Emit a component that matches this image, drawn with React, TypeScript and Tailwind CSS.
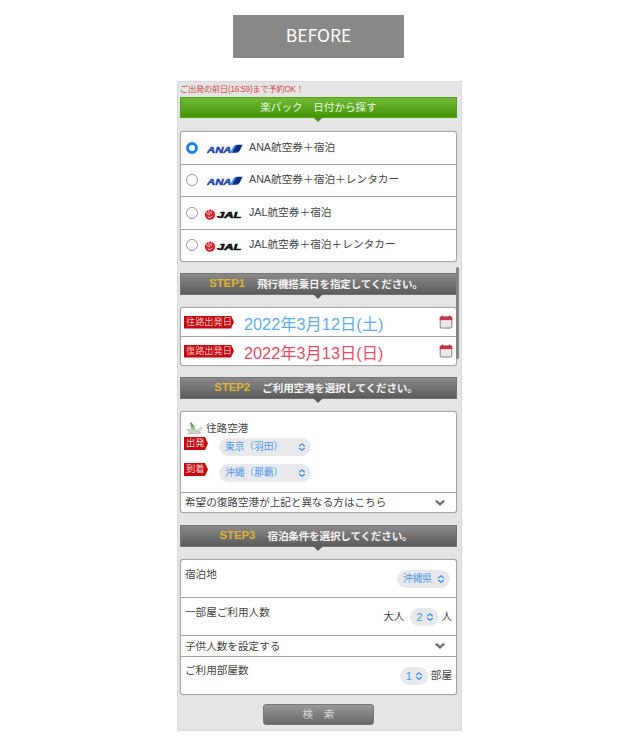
import type { ReactNode } from "react";
import clsx from "clsx";

function AnaLogo() {
  return (
    <svg className="w-[36px] h-[11px] ml-[8px]" viewBox="0 0 36 11">
      <text
        x="0"
        y="9.8"
        fontSize="9.8"
        fontWeight="900"
        fontStyle="italic"
        fontFamily="Liberation Sans, sans-serif"
        fill="#2444a8"
        stroke="#2444a8"
        strokeWidth="0.5"
        textLength="24.5"
        lengthAdjust="spacingAndGlyphs">
        ANA
      </text>
      <path d="M23 9.8 L26.6 3.4 Q27.5 1.8 29.5 1.8 L31 1.8 L26.3 9.8 Z" fill="#3d8fd0" />
      <path d="M25.2 9.8 L28.6 3.6 Q29.6 1.8 31.6 1.8 L35.6 1.8 L32.5 8 Q31.5 9.8 29.5 9.8 Z" fill="#0c2c8c" />
    </svg>
  );
}

function JalLogo() {
  return (
    <svg className="w-[38px] h-[13px] ml-[6px]" viewBox="0 0 38 13">
      <circle cx="6" cy="6.6" r="5.2" fill="#d8232e" />
      <path d="M2 3.2 Q2.6 7 6 7 M4.6 1.6 Q4 5.2 6.2 5.6 M8 2.2 Q6 4 7.4 6" stroke="#f6c5c7" strokeWidth="0.9" fill="none" />
      <path d="M4 9.2 Q6.6 10.2 8.4 7.9" stroke="#f6c5c7" strokeWidth="0.9" fill="none" />
      <text
        x="13"
        y="10.3"
        fontSize="9.4"
        fontWeight="900"
        fontStyle="italic"
        fontFamily="Liberation Sans, sans-serif"
        fill="#111"
        stroke="#111"
        strokeWidth="0.6"
        textLength="24.5"
        lengthAdjust="spacingAndGlyphs">
        JAL
      </text>
    </svg>
  );
}

function CalendarIcon() {
  return (
    <svg className="w-[14px] h-[14px]" viewBox="0 0 14 14">
      <rect x="1.2" y="2" width="11.6" height="11" rx="1" fill="#f3eeee" stroke="#857b7b" />
      <path d="M0.8 1.6 H13.2 V5.2 H0.8 Z" fill="#c9364a" />
      <path d="M3.5 0.6 V2.8 M10.5 0.6 V2.8" stroke="#7d4a50" strokeWidth="1.2" />
      <path d="M3 8 H11 M3 10.5 H11" stroke="#e0dada" strokeWidth="0.8" />
    </svg>
  );
}

function PlaneIcon() {
  return (
    <svg className="w-[17px] h-[14px]" viewBox="0 0 17 14">
      <path d="M0.8 7.6 L5 7.4 L13 9.8 Q15 10.6 14.4 11.6 Q12 12.4 8 11.4 L2.4 9.2 Z" fill="#d3d5d3" stroke="#a3a8a3" strokeWidth="0.5" />
      <path d="M9.8 9.4 L14.8 5.2 L16 5.4 L13.4 10 Z" fill="#dfe2df" stroke="#a5aaa5" strokeWidth="0.5" />
      <path d="M3.4 9.8 L1.6 12.4 L3 12.6 L8.4 11.4 Z" fill="#c3c7c3" />
      <path d="M4 0.6 L5.6 0.8 L9.4 6 L9.2 8.4 L5.2 7.4 Z" fill="#9cc792" />
      <path d="M4 0.6 L5.6 0.8 L8.6 5 L5.6 5 Z" fill="#4fae3d" />
    </svg>
  );
}

function ChevronDown() {
  return (
    <svg className="w-[10px] h-[8px]" viewBox="0 0 10 8">
      <path d="M0.8 1.6 L5 5.4 L9.2 1.6" stroke="#757575" strokeWidth="2.5" fill="none" />
    </svg>
  );
}

function Bar({ children, green }: { children: ReactNode; green?: boolean }) {
  return (
    <div
      className={clsx(
        "relative w-[277px] flex items-center justify-center border text-[10.6px] leading-none whitespace-pre",
        green
          ? "h-[21px] bg-linear-to-b from-[#70b833] to-[#429600] border-[#519d1c] text-[#d6ebc5] font-medium"
          : "h-[22px] pr-[5px] bg-linear-to-b from-[#8b8b8b] to-[#5b5b5b] border-[#747474] text-[#f2f2f2] font-bold"
      )}>
      {children}
      <div
        className={clsx(
          "absolute top-full left-[132px] border-x-[5px] border-x-transparent border-t-[5px]",
          green ? "border-t-[#459414]" : "border-t-[#5b5b5b]"
        )}
      />
    </div>
  );
}

function Step({ label, title }: { label: string; title: string }) {
  return (
    <Bar>
      <span className="text-[#dfb32e] mr-[11px] w-[37px] text-[11.3px]">{label}</span>
      <span className="tracking-[-0.2px]">{title}</span>
    </Bar>
  );
}

function Card({ children, className }: { children: ReactNode; className?: string }) {
  return (
    <div
      className={clsx(
        "w-[277px] bg-white border border-[#a6a6a6] rounded-[3px] shadow-[0_0_1px_#999] divide-y divide-[#a3a3a3] flex flex-col",
        className
      )}>
      {children}
    </div>
  );
}

function Tag({ children, className }: { children: ReactNode; className?: string }) {
  return (
    <div
      className={clsx(
        "h-[13px] bg-[#c4090f] text-[9.2px] leading-[12px] pl-[2px] whitespace-nowrap [clip-path:polygon(0_0,calc(100%-3px)_0,100%_50%,calc(100%-3px)_100%,0_100%)]",
        className
      )}>
      {children}
    </div>
  );
}

function Select({ children, className }: { children: ReactNode; className?: string }) {
  return (
    <div
      className={clsx(
        "h-[18px] rounded-full bg-[#e9e9eb] flex items-center justify-between pl-[6px] pr-[5px] leading-none text-[#4a9bf0] whitespace-nowrap",
        className
      )}>
      <span>{children}</span>
      <svg className="w-[8px] h-[10px] shrink-0" viewBox="0 0 8 10">
        <path d="M1.2 4.2 L4 1.8 L6.8 4.2 M1.2 6 L4 8.4 L6.8 6" stroke="#3f96f3" strokeWidth="1.4" fill="none" />
      </svg>
    </div>
  );
}

const plans = [
  { airline: "ana", label: "ANA航空券＋宿泊", checked: true },
  { airline: "ana", label: "ANA航空券＋宿泊＋レンタカー" },
  { airline: "jal", label: "JAL航空券＋宿泊" },
  { airline: "jal", label: "JAL航空券＋宿泊＋レンタカー" },
];

const dates = [
  { tag: "往路出発日", value: "2022年3月12日(土)", color: "text-[#61adea]" },
  { tag: "復路出発日", value: "2022年3月13日(日)", color: "text-[#e64d67]" },
];

function App() {
  return (
    <div className="w-[640px] h-[750px] bg-white pt-[15px] overflow-hidden">
      <div className="ml-[233px] w-[171px] h-[43px] bg-[#888] text-white text-[17.5px] flex items-center justify-center pb-[3px] font-['Noto_Sans_CJK_JP','Noto_Sans',sans-serif]">
        BEFORE
      </div>

      <div className="relative ml-[177px] mt-[23px] w-[285px] h-[650px] bg-[#e5e5e5] border border-[#d9d9d9] pl-[2px] text-[10.6px] leading-none text-[#444] font-['Liberation_Sans','Noto_Sans_CJK_JP',sans-serif]">
        <div className="h-[15px] pt-[3px] text-[8.2px] leading-[10px] tracking-[-0.2px] text-[#d44a4a] whitespace-nowrap">
          ご出発の前日(16:59)まで予約OK！
        </div>
        <Bar green>楽パック　日付から探す</Bar>

        <Card className="mt-[13px] h-[131px]">
          {plans.map((plan) => (
            <div key={plan.label} className="flex-1 flex items-center pl-[5px]">
              <div
                className={clsx(
                  "w-[12px] h-[12px] rounded-full bg-white",
                  plan.checked ? "border-[3.5px] border-[#1b82f5]" : "border border-[#999]"
                )}
              />
              {plan.airline === "ana" ? (
                <div className="w-[51px] pt-[1px] pl-[1px]"><AnaLogo /></div>
              ) : (
                <div className="w-[51px] pt-[3px]"><JalLogo /></div>
              )}
              <span className="whitespace-nowrap -mt-[1px] text-[10.7px]">{plan.label}</span>
            </div>
          ))}
        </Card>

        <div className="mt-[11px]">
          <Step label="STEP1" title="飛行機搭乗日を指定してください。" />
        </div>

        <Card className="mt-[12px] h-[59px]">
          {dates.map((date) => (
            <div key={date.tag} className="flex-1 flex items-center pl-[3px] pr-[3px]">
              <Tag className="w-[50px] text-[#f4b9b9]">{date.tag}</Tag>
              <span className={clsx("ml-[10px] mt-[4px] text-[16.3px] whitespace-nowrap", date.color)}>{date.value}</span>
              <div className="ml-auto"><CalendarIcon /></div>
            </div>
          ))}
        </Card>

        <div className="mt-[11px]">
          <Step label="STEP2" title="ご利用空港を選択してください。" />
        </div>

        <Card className="mt-[12px] h-[102px]">
          <div className="h-[81px] pl-[3px] pt-[9px]">
            <div className="flex items-center h-[15px] pl-[2px]">
              <PlaneIcon />
              <span className="ml-[3px]">往路空港</span>
            </div>
            <div className="flex h-[26px] pt-[1px]">
              <Tag className="w-[24px] text-[#f8d5d5]">出発</Tag>
              <Select className="w-[92px] ml-[11px] mt-[1px] text-[9.7px]">東京（羽田）</Select>
            </div>
            <div className="flex pt-[1px]">
              <Tag className="w-[24px] text-[#f8d5d5]">到着</Tag>
              <Select className="w-[92px] ml-[11px] mt-[1px] text-[9.7px]">沖縄（那覇）</Select>
            </div>
          </div>
          <div className="flex-1 flex items-center justify-between pl-[4px] pr-[11px]">
            <span>希望の復路空港が上記と異なる方はこちら</span>
            <ChevronDown />
          </div>
        </Card>

        <div className="mt-[12px]">
          <Step label="STEP3" title="宿泊条件を選択してください。" />
        </div>

        <Card className="mt-[12px] h-[136px]">
          <div className="h-[38px] flex justify-between pl-[4px] pr-[6px]">
            <span className="mt-[9px]">宿泊地</span>
            <Select className="w-[53px] mt-[10px] text-[9.7px]">沖縄県</Select>
          </div>
          <div className="h-[38px] flex pl-[4px] pr-[4px]">
            <span className="mt-[9px] mr-auto">一部屋ご利用人数</span>
            <span className="mt-[13px] mr-[6px]">大人</span>
            <Select className="w-[29px] mt-[10px] mr-[2px] text-[11px]">2</Select>
            <span className="mt-[13px]">人</span>
          </div>
          <div className="h-[21px] flex items-center justify-between pl-[4px] pr-[11px]">
            <span>子供人数を設定する</span>
            <ChevronDown />
          </div>
          <div className="flex-1 flex pl-[4px] pr-[4px]">
            <span className="mt-[8px] mr-auto">ご利用部屋数</span>
            <Select className="w-[28px] mt-[10px] mr-[3px] text-[11px]">1</Select>
            <span className="mt-[13px]">部屋</span>
          </div>
        </Card>

        <button className="block ml-[83px] mt-[9px] w-[111px] h-[21px] rounded-[3px] border border-[#777] bg-linear-to-b from-[#989898] to-[#686868] text-[#d5d5d5] text-[10.6px] leading-none">
          検　索
        </button>

        {/* scroll indicator */}
        <div className="absolute left-[278px] top-[185px] w-[3px] h-[92px] rounded-full bg-[#858585]" />
      </div>
    </div>
  );
}

export default App;
